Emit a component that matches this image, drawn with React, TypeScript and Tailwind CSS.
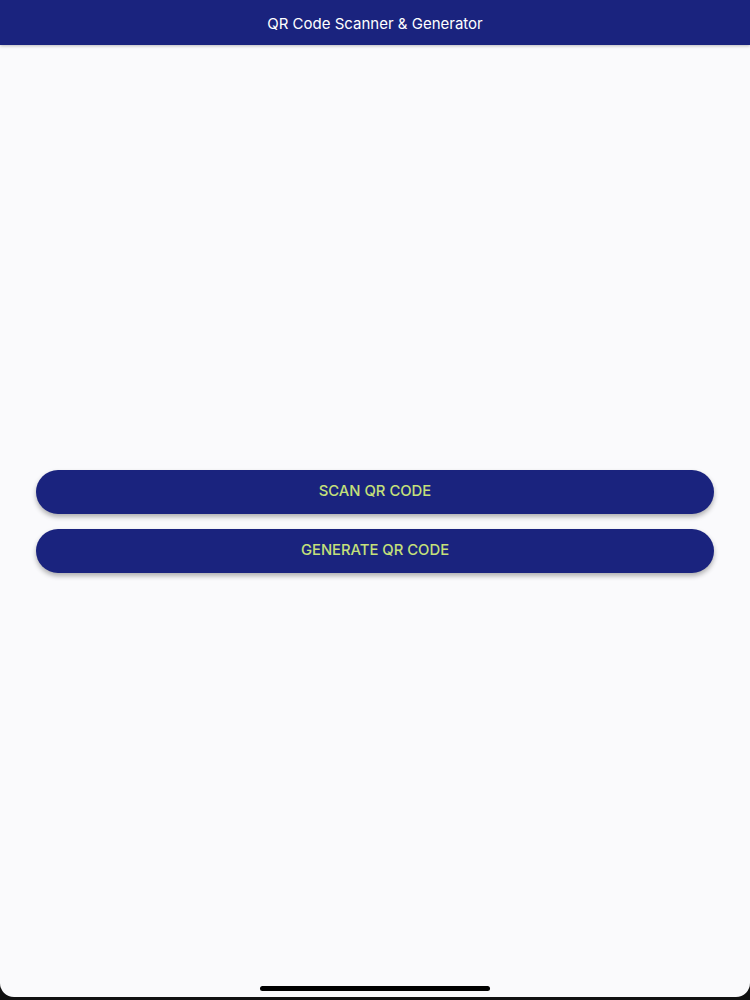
export default function App() {
  return (
    <div className="h-[1000px] w-full bg-[#111] font-['Inter','Roboto',sans-serif]">
      <div className="flex h-[997px] flex-col overflow-hidden rounded-b-[14px] bg-[#fafafc]">
        <header className="flex h-[45px] shrink-0 items-center justify-center bg-[#1a237e] pt-[4px] shadow-[0_1px_3px_rgba(0,0,0,0.25)]">
          <h1 className="text-[15px] font-normal text-white">QR Code Scanner &amp; Generator</h1>
        </header>
        <main className="relative flex flex-1 flex-col justify-center gap-[15px] px-[36px]">
          <button className="h-[44px] w-full rounded-full bg-[#1a237e] text-[14.8px] font-medium text-[#c5e07a] shadow-[0_3px_5px_rgba(0,0,0,0.3)]">
            SCAN QR CODE
          </button>
          <button className="h-[44px] w-full rounded-full bg-[#1a237e] text-[14.8px] font-medium text-[#c5e07a] shadow-[0_3px_5px_rgba(0,0,0,0.3)]">
            GENERATE QR CODE
          </button>
          <div className="absolute bottom-[6px] left-[260px] h-[5px] w-[230px] rounded-full bg-black" />
        </main>
      </div>
    </div>
  );
}
